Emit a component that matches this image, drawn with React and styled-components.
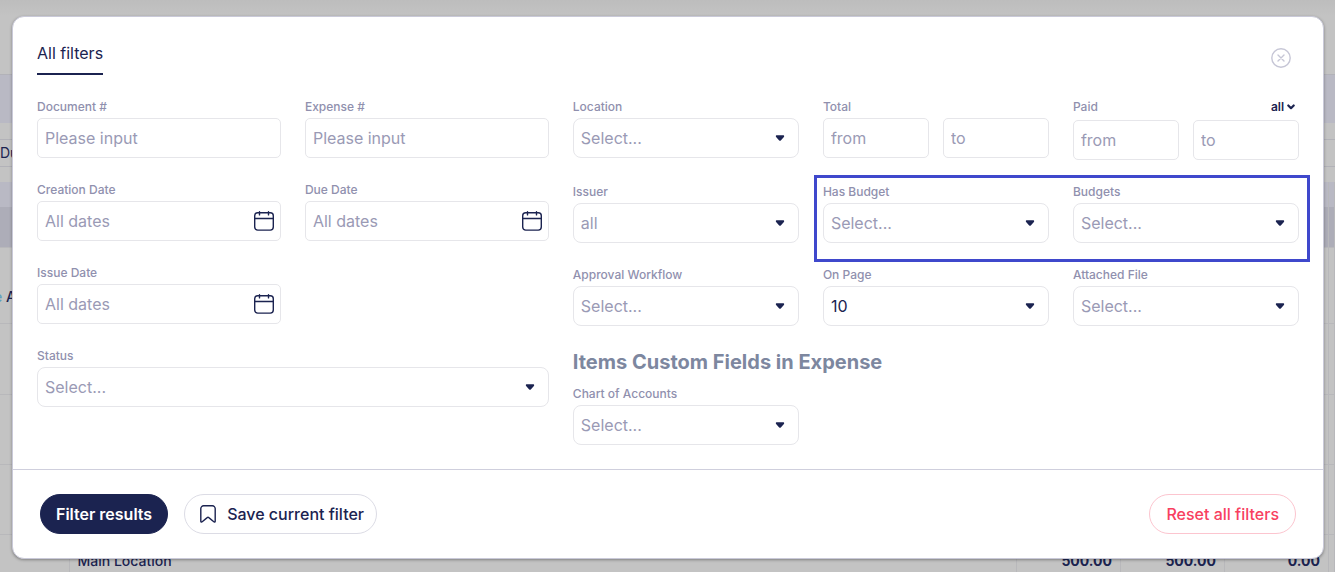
import React, { useState } from "react";
import styled, { createGlobalStyle } from "styled-components";

const GlobalStyle = createGlobalStyle`
  * {
    box-sizing: border-box;
  }

  body {
    margin: 0;
    background-color: #c3c3c3;
    color: #1b2350;
    font-family: Inter, "Liberation Sans", sans-serif;
    font-size: 16px;
  }

  input, select, button {
    font-family: inherit;
    color: inherit;
    margin: 0;
  }
`;

const Page = styled.div`
  position: relative;
  height: 100vh;
  overflow: hidden;
`;

const TopBar = styled.header`
  height: 75px;
  border-bottom: 1px solid #b2b2b8;
  background: linear-gradient(#bdbdbd, #c3c3c3 16px);
`;

const Band = styled.div`
  height: 48px;
  background-color: #b9b9c4;
`;

const SortBar = styled.div`
  height: 28px;
  margin: 16px 0 15px;
  border: solid #b2b2b8;
  border-width: 1px 0;
  font-size: 14px;
  line-height: 26px;
`;

const Table = styled.table`
  width: 100%;
  table-layout: fixed;
  border-collapse: collapse;
  font-size: 14px;
`;

const Tr = styled.tr`
  height: ${(props) => props.$height}px;
  background-color: ${(props) => props.$color || "transparent"};
  border-top: 1px solid ${(props) => props.$color || "#b8b8bb"};
`;

const Td = styled.td`
  padding: 0 8px;
  border-right: 1px solid #b8b8bb;
  font-weight: ${(props) => (props.$amount ? 700 : 500)};
  text-align: ${(props) => (props.$amount ? "right" : "left")};
`;

const EdgeTd = styled(Td)`
  padding: 22px 0 0;
  text-indent: -6px;
  white-space: nowrap;
`;

const RowLink = styled.a`
  color: #5f9fc0;
  text-decoration: none;
`;

const Overlay = styled.div`
  position: absolute;
  inset: 0;
  padding: 16px 11px 0 12px;
`;

const Modal = styled.form`
  border: 1px solid #c9c9d8;
  border-radius: 12px;
  background-color: #fff;
  box-shadow: 0 1px 3px rgba(0, 0, 0, 0.35);
`;

const ModalHeader = styled.div`
  display: flex;
  justify-content: space-between;
  align-items: center;
  padding: 24px 24px 0;
`;

const Tab = styled.button`
  padding: 0 0 8px;
  border: 0;
  border-bottom: 2px solid #1b2350;
  background: none;
  font-size: 16px;
  line-height: 24px;
`;

const CloseButton = styled.button`
  display: flex;
  padding: 0 8px;
  border: 0;
  background: none;
`;

const ModalBody = styled.div`
  display: grid;
  grid-template-columns: repeat(12, 1fr);
  column-gap: 24px;
  align-items: start;
  padding: 24px;
`;

const LeftFields = styled.div`
  grid-column: span 5;
  display: grid;
  grid-template-columns: repeat(2, 1fr);
  gap: 24px;
`;

const RightFields = styled.div`
  grid-column: span 7;
  display: grid;
  gap: 24px;
`;

const FieldGrid = styled.div`
  display: grid;
  grid-template-columns: repeat(3, 1fr);
  gap: 24px;
`;

const Highlight = styled.div`
  position: relative;
  grid-column: span 2;
  display: grid;
  grid-template-columns: repeat(2, 1fr);
  gap: 24px;

  &::after {
    content: "";
    position: absolute;
    inset: -9px -11px -19px -9px;
    border: 3px solid #3f48cc;
    pointer-events: none;
  }
`;

const Field = styled.div`
  grid-column: span ${(props) => props.$span || 1};
  min-width: 0;
`;

const Label = styled.label`
  display: block;
  margin-bottom: 4px;
  color: #9090ae;
  font-size: 12px;
  font-weight: 500;
  line-height: 15px;
`;

const LabelRow = styled.div`
  display: flex;
  justify-content: space-between;
  align-items: flex-start;
  height: 21px;
`;

const Control = styled.div`
  display: grid;
  align-items: center;

  > * {
    grid-area: 1 / 1;
  }

  > svg {
    justify-self: end;
    margin-right: ${(props) => props.$iconGap || 0}px;
    pointer-events: none;
  }
`;

const Input = styled.input`
  width: 100%;
  height: 40px;
  padding: 0 7px;
  border: 1px solid #e6e6ea;
  border-radius: 5px;
  background-color: #fff;
  font-size: 16px;
  outline: none;

  &::placeholder {
    color: #9a9ab5;
    opacity: 1;
  }
`;

const Select = styled.select`
  appearance: none;
  width: 100%;
  height: 40px;
  padding: 0 7px;
  border: 1px solid #e6e6ea;
  border-radius: 8px;
  background-color: #fff;
  color: ${(props) => (props.$filled ? "#1b2350" : "#9a9ab5")};
  font-size: 16px;
  outline: none;
`;

const SmallSelect = styled.select`
  appearance: none;
  padding: 0 14px 0 0;
  border: 0;
  background: none;
  color: #1b2350;
  font-size: 12px;
  font-weight: 600;
  line-height: 15px;
`;

const Range = styled.div`
  display: grid;
  grid-template-columns: 1fr 1fr;
  gap: 14px;
`;

const SectionTitle = styled.h2`
  margin: 0 0 12px;
  color: #7d879f;
  font-size: 20px;
  font-weight: 700;
  line-height: 24px;
`;

const ModalFooter = styled.div`
  display: flex;
  gap: 16px;
  padding: 24px 27px;
  border-top: 1px solid #cfcfdd;
`;

const Button = styled.button`
  display: flex;
  align-items: center;
  gap: 11px;
  height: 40px;
  padding: 0 15px;
  border: 1px solid #dcdce5;
  border-radius: 20px;
  background-color: #fff;
  color: #1b2350;
  font-size: 16px;
  font-weight: 500;
  white-space: nowrap;
`;

const PrimaryButton = styled(Button)`
  border-color: #1b2350;
  background-color: #1b2350;
  color: #fff;
  font-weight: 600;
`;

const SaveButton = styled(Button)`
  padding-right: 12px;
`;

const ResetButton = styled(Button)`
  margin-left: auto;
  padding: 0 16px;
  border-color: #fcc5cf;
  color: #f8405f;
`;

const CaretIcon = () => (
  <svg width="10" height="6" viewBox="0 0 10 6" aria-hidden="true">
    <path
      d="M1.8 .3h6.4c.9 0 1.3 1 .7 1.6L5.8 5.4a1.1 1.1 0 0 1-1.6 0L1.1 1.9C.5 1.3.9.3 1.8.3z"
      fill="#1b2350"
    />
  </svg>
);

const ChevronIcon = () => (
  <svg width="8" height="6" viewBox="0 0 8 6" aria-hidden="true">
    <path
      d="M1.3 1.5 4 4.2l2.7-2.7"
      fill="none"
      stroke="#1b2350"
      strokeWidth="2.2"
      strokeLinecap="round"
      strokeLinejoin="round"
    />
  </svg>
);

const CalendarIcon = () => (
  <svg width="20" height="20" viewBox="0 0 20 20" aria-hidden="true">
    <g fill="none" stroke="#1b2350" strokeWidth="1.4" strokeLinecap="round">
      <rect x=".7" y="1.7" width="18.6" height="17.4" rx="3" />
      <path d="M.7 7.5h18.6M5.5.7v3.2M14.5.7v3.2" />
    </g>
  </svg>
);

const BookmarkIcon = () => (
  <svg width="16" height="18" viewBox="0 0 16 18" aria-hidden="true">
    <path
      d="M.8 16.2V3.6A2.8 2.8 0 0 1 3.6.8h8.8a2.8 2.8 0 0 1 2.8 2.8v12.6c0 .8-.8 1.1-1.4.6L8.8 12.6a1.2 1.2 0 0 0-1.6 0L2.2 16.8c-.6.5-1.4.2-1.4-.6z"
      fill="none"
      stroke="#1b2350"
      strokeWidth="1.4"
      strokeLinejoin="round"
    />
  </svg>
);

const CloseIcon = () => (
  <svg width="20" height="20" viewBox="0 0 20 20" aria-hidden="true">
    <g fill="none" stroke="#c6c6d6" strokeWidth="1.4" strokeLinecap="round">
      <circle cx="10" cy="10" r="9.2" />
      <path d="M7 7l6 6M13 7l-6 6" />
    </g>
  </svg>
);

const TextField = ({ id, label }) => (
  <Field>
    <Label htmlFor={id}>{label}</Label>
    <Input id={id} type="text" placeholder="Please input" />
  </Field>
);

const DateField = ({ id, label }) => (
  <Field>
    <Label htmlFor={id}>{label}</Label>
    <Control $iconGap={7}>
      <Input id={id} type="text" placeholder="All dates" />
      <CalendarIcon />
    </Control>
  </Field>
);

const SelectField = ({ id, label, span, value = "Select...", filled }) => (
  <Field $span={span}>
    <Label htmlFor={id}>{label}</Label>
    <Control $iconGap={14}>
      <Select id={id} $filled={filled}>
        <option>{value}</option>
      </Select>
      <CaretIcon />
    </Control>
  </Field>
);

const RangeInputs = ({ id, label }) => (
  <Range>
    <Input id={id} type="text" placeholder="from" />
    <Input type="text" placeholder="to" aria-label={`${label} to`} />
  </Range>
);

const rows = [
  { height: 25, color: "#b9b9c4" },
  { height: 40, color: "#adadb8" },
  { height: 76, link: "e", user: "A" },
  { height: 71 },
  { height: 70 },
  { height: 70 },
  { height: 52, location: "Main Location", amounts: ["500.00", "500.00", "0.00"] },
];

const ExpensesPage = () => (
  <>
    <TopBar />
    <Band />
    <SortBar>Du</SortBar>
    <Table>
      <colgroup>
        <col width="69" />
        <col />
        <col width="104" />
        <col width="104" />
        <col width="104" />
        <col width="6" />
      </colgroup>
      <tbody>
        {rows.map((row, index) => (
          <Tr key={index} $height={row.height} $color={row.color}>
            <EdgeTd>
              {row.link && (
                <>
                  <RowLink href="#">{row.link}</RowLink> {row.user}
                </>
              )}
            </EdgeTd>
            <Td>{row.location}</Td>
            {(row.amounts || ["", "", ""]).map((amount, i) => (
              <Td key={i} $amount>
                {amount}
              </Td>
            ))}
            <EdgeTd />
          </Tr>
        ))}
      </tbody>
    </Table>
  </>
);

const App = () => {
  const [paid, setPaid] = useState("all");

  return (
    <Page>
      <GlobalStyle />
      <ExpensesPage />
      <Overlay>
        <Modal onSubmit={(e) => e.preventDefault()}>
          <ModalHeader>
            <Tab type="button">All filters</Tab>
            <CloseButton type="button" aria-label="Close">
              <CloseIcon />
            </CloseButton>
          </ModalHeader>
          <ModalBody>
            <LeftFields>
              <TextField id="document" label="Document #" />
              <TextField id="expense" label="Expense #" />
              <DateField id="creation-date" label="Creation Date" />
              <DateField id="due-date" label="Due Date" />
              <DateField id="issue-date" label="Issue Date" />
              <SelectField id="status" label="Status" span={2} />
            </LeftFields>
            <RightFields>
              <FieldGrid>
                <SelectField id="location" label="Location" />
                <Field>
                  <Label htmlFor="total">Total</Label>
                  <RangeInputs id="total" label="Total" />
                </Field>
                <Field>
                  <LabelRow>
                    <Label htmlFor="paid">Paid</Label>
                    <Control $iconGap={4}>
                      <SmallSelect
                        aria-label="Paid status"
                        value={paid}
                        onChange={(e) => setPaid(e.target.value)}
                      >
                        <option value="all">all</option>
                      </SmallSelect>
                      <ChevronIcon />
                    </Control>
                  </LabelRow>
                  <RangeInputs id="paid" label="Paid" />
                </Field>
                <SelectField id="issuer" label="Issuer" value="all" />
                <Highlight>
                  <SelectField id="has-budget" label="Has Budget" />
                  <SelectField id="budgets" label="Budgets" />
                </Highlight>
                <SelectField id="workflow" label="Approval Workflow" />
                <SelectField id="on-page" label="On Page" value="10" filled />
                <SelectField id="attached-file" label="Attached File" />
              </FieldGrid>
              <div>
                <SectionTitle>Items Custom Fields in Expense</SectionTitle>
                <FieldGrid>
                  <SelectField id="accounts" label="Chart of Accounts" />
                </FieldGrid>
              </div>
            </RightFields>
          </ModalBody>
          <ModalFooter>
            <PrimaryButton type="submit">Filter results</PrimaryButton>
            <SaveButton type="button">
              <BookmarkIcon />
              Save current filter
            </SaveButton>
            <ResetButton type="reset">Reset all filters</ResetButton>
          </ModalFooter>
        </Modal>
      </Overlay>
    </Page>
  );
};

export default App;
